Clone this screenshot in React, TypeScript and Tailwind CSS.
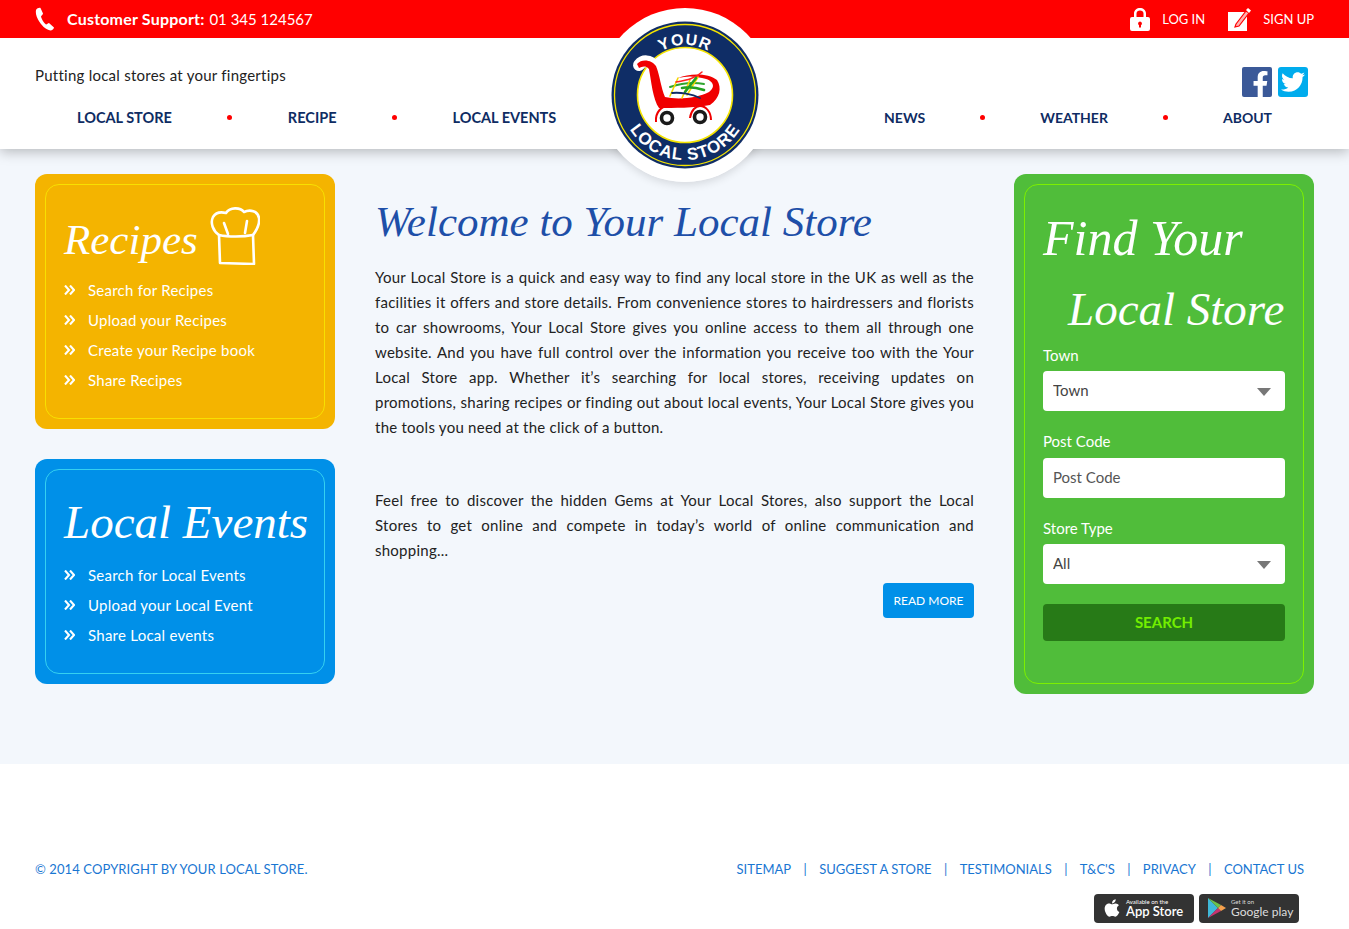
import React from "react";
import { FaApple, FaFacebookF, FaTwitter } from "react-icons/fa";

const navLeft = ["LOCAL STORE", "RECIPE", "LOCAL EVENTS"];
const navRight = ["NEWS", "WEATHER", "ABOUT"];
const footerLinks = ["SITEMAP", "SUGGEST A STORE", "TESTIMONIALS", "T&C'S", "PRIVACY", "CONTACT US"];

const script = "font-['Liberation_Serif',serif] italic font-normal whitespace-nowrap";

const Logo = () => (
  <svg viewBox="8 8 174 174" className="absolute left-[598px] top-[8px] z-20 h-[174px] w-[174px]">
    <circle cx="95" cy="95" r="87" fill="#fff" />
    <circle cx="95" cy="95" r="73.5" fill="#0f2d66" />
    <circle cx="95" cy="95" r="70.5" fill="none" stroke="#f5e400" strokeWidth="1.3" />
    <circle cx="95" cy="95" r="47.5" fill="#fff" stroke="#f5e400" strokeWidth="1.6" />
    <path id="logoTop" d="M 45 95 A 50 50 0 0 1 145 95" fill="none" />
    <path id="logoBottom" d="M 30 95 A 65 65 0 0 0 160 95" fill="none" />
    <text fill="#fff" fontSize="16" fontWeight="700" letterSpacing="1" fontFamily="Liberation Sans, sans-serif" textAnchor="middle">
      <textPath href="#logoTop" startOffset="50%">YOUR</textPath>
    </text>
    <text fill="#fff" fontSize="17" fontWeight="700" letterSpacing="1" fontFamily="Liberation Sans, sans-serif" textAnchor="middle">
      <textPath href="#logoBottom" startOffset="50%">LOCAL STORE</textPath>
    </text>
    {/* cart */}
    <path d="M49 65 C53 60 60 60 64 66" fill="none" stroke="#fff" strokeWidth="12" strokeLinecap="round" />
    <path
      fillRule="evenodd"
      fill="#f00000"
      d="M47 64 C52 58 62 60 66 66 C70 76 71 88 75 97 C88 100 108 98 119 92 C126 87 124 80 112 78 C104 76 96 76 88 78 C100 73 118 73 127 80 C132 88 130 98 120 105 C104 108 84 108 69 108 C63 100 61 80 59 69 C55 65 52 67 49 68 Z"
    />
    <path d="M80 87 C92 83 104 82 114 84" fill="none" stroke="#2fa52f" strokeWidth="2" strokeLinecap="round" />
    <path d="M88 78 L80 96 M100 80 L92 98 M108 77 L97 95" fill="none" stroke="#f5d800" strokeWidth="1.6" strokeLinecap="round" />
    <path d="M86 82 C98 80 106 78 112 72" fill="none" stroke="#ff2020" strokeWidth="1.5" strokeLinecap="round" />
    <path d="M95 92 L106 78 M92 88 C100 86 108 88 114 90" fill="none" stroke="#22a022" strokeWidth="2.6" strokeLinecap="round" />
    <path d="M82 93 C90 92 102 94 110 98" fill="none" stroke="#0f2d66" strokeWidth="1.8" strokeLinecap="round" />
    <path d="M66 122 C65 112 72 106 78 106 M100 118 C101 110 106 106 110 106 C116 106 121 112 121 120" fill="none" stroke="#f00000" strokeWidth="2" />
    <circle cx="77" cy="118" r="5.5" fill="#fff" stroke="#1a1a1a" strokeWidth="3.6" />
    <circle cx="110" cy="117" r="5.5" fill="#fff" stroke="#1a1a1a" strokeWidth="3.6" />
  </svg>
);

const TopBar = () => (
  <div className="flex h-[38px] items-center justify-between bg-[#ff0000] px-[35px] text-white">
    <div className="flex items-center gap-[12px]">
      <svg viewBox="0 0 20 24" className="h-[24px] w-[20px]" fill="#fff">
        <path d="M1 3 C2 1.5 4 .5 5.5 1 L8 6.5 C8 7.5 6.5 8.5 6 9.5 C6.5 12 9 16 11 17.5 C12 17.2 13 16 14 16 L19 20.5 C19 22 17 23.5 15.5 23.5 C11 23 6 18 3 12.5 C1 9 .5 5 1 3 Z" />
      </svg>
      <span className="text-[15px]">
        <b className="mr-[1px] text-[16px] tracking-[0.2px]">Customer Support:</b> 01 345 124567
      </span>
    </div>
    <div className="flex items-center text-[13px]">
      <svg viewBox="0 0 20 24" className="mr-[12px] h-[24px] w-[20px]" fill="#fff">
        <path d="M4 10 V6.5 C4 3 7 1 10 1 C13 1 16 3 16 6.5 V10 H13.5 V6.5 C13.5 4.5 12 3.4 10 3.4 C8 3.4 6.5 4.5 6.5 6.5 V10 Z" />
        <path fillRule="evenodd" d="M2 10 H18 Q20 10 20 12 V22 Q20 24 18 24 H2 Q0 24 0 22 V12 Q0 10 2 10 Z M10 14.5 A2 2 0 0 0 9 18.2 V20.5 H11 V18.2 A2 2 0 0 0 10 14.5 Z" />
      </svg>
      <span className="mt-[1px]">LOG IN</span>
      <svg viewBox="0 0 23 23" className="ml-[23px] mr-[12px] h-[23px] w-[23px]">
        <rect x="0" y="4" width="19" height="19" fill="#fff" />
        <path d="M8 16 L18 3 L21 5 L11 18 L7 19 Z" fill="#ffb0b0" stroke="#ff0000" strokeWidth="1.2" />
        <path d="M18 2 L20 0 L23 2.5 L21 5 Z" fill="#fff" />
      </svg>
      <span className="mt-[1px]">SIGN UP</span>
    </div>
  </div>
);

const NavGroup = ({ items, className }: { items: string[]; className: string }) => (
  <div className={`flex items-center font-bold text-[#0e2c63] ${className}`}>
    {items.map((item, i) => (
      <React.Fragment key={item}>
        {i > 0 && <span className="h-[5px] w-[5px] rounded-full bg-[#ff0000]" />}
        <a>{item}</a>
      </React.Fragment>
    ))}
  </div>
);

const Header = () => (
  <header className="relative z-10 shadow-[0_3px_12px_rgba(0,0,0,0.25)]">
    <TopBar />
    <div className="h-[111px] bg-white">
      <div className="flex items-start justify-between pl-[35px] pr-[41px] pt-[29px]">
        <p className="mt-[-3px] text-[15px] tracking-[0.25px] text-[#222]">Putting local stores at your fingertips</p>
        <div className="flex gap-[6px]">
          <span className="flex h-[30px] w-[30px] items-end justify-end overflow-hidden rounded-[2px] bg-[#3b5998] pr-[3px] text-white">
            <FaFacebookF className="h-[26px] w-[17px]" />
          </span>
          <span className="flex h-[30px] w-[30px] items-center justify-center rounded-[3px] bg-[#00aced] text-white">
            <FaTwitter className="h-[24px] w-[24px]" />
          </span>
        </div>
      </div>
      <nav className="mt-[10px] flex justify-between px-[77px]">
        <NavGroup items={navLeft} className="gap-[55.5px] text-[14.5px]" />
        <NavGroup items={navRight} className="gap-[55px] text-[14px]" />
      </nav>
    </div>
    {/* soft shadow of the badge, only visible below the header */}
    <span className="absolute left-[598px] top-[8px] -z-10 h-[174px] w-[174px] rounded-full shadow-[0_3px_8px_rgba(0,0,0,0.12)]" />
    <Logo />
  </header>
);

const Chevrons = () => (
  <svg viewBox="0 0 11 10" className="h-[10px] w-[11px] shrink-0" fill="none" stroke="#fff" strokeWidth="2.1">
    <path d="M1 .5 L5 5 L1 9.5 M6 .5 L10 5 L6 9.5" />
  </svg>
);

const SideCard = ({
  title,
  titleSize,
  items,
  outer,
  inner,
  children,
}: {
  title: string;
  titleSize: string;
  items: string[];
  outer: string;
  inner: string;
  children?: React.ReactNode;
}) => (
  <section className={`rounded-[12px] p-[10px] text-white ${outer}`}>
    <div className={`rounded-[14px] border pl-[18px] pr-[5px] ${inner}`}>
      <div className="flex h-[86px] items-end pb-[10px]">
        <h2 className={`leading-none ${titleSize} ${script}`}>{title}</h2>
        {children}
      </div>
      <ul className="flex flex-col gap-[6px] pb-[26px] pt-[7px] text-[15px] tracking-[0.25px]">
        {items.map((item) => (
          <li key={item} className="flex h-[24px] items-center gap-[13px]">
            <Chevrons />
            <span>{item}</span>
          </li>
        ))}
      </ul>
    </div>
  </section>
);

const ChefHat = () => (
  <svg viewBox="0 0 50 58" className="mb-[-4px] ml-[12px] h-[58px] w-[50px]" fill="none" stroke="#fff" strokeWidth="2.6" strokeLinecap="round" strokeLinejoin="round">
    <path d="M9 28 C3 24 0 16 3 10 C6 5 12 5 16 6 C20 0 30 0 34 5 C40 2 48 4 49 11 C50 18 46 24 43 28" />
    <path d="M9 28 L10 56 L44 57 L43 28 C33 30 18 30 9 28 Z" />
    <path d="M14 16 L18 27 M37 14 L35 26" />
  </svg>
);

const Field = ({ label, children }: { label: string; children: React.ReactNode }) => (
  <div>
    <label className="mb-[5px] block text-[15px] leading-[22px]">{label}</label>
    {children}
  </div>
);

const Select = ({ value }: { value: string }) => (
  <div className="relative">
    <select className="h-[40px] w-full appearance-none rounded-[4px] bg-white px-[10px] pb-[2px] text-[15px] text-[#444]" defaultValue={value}>
      <option>{value}</option>
    </select>
    <span className="absolute right-[14px] top-[17px] h-0 w-0 border-x-[7px] border-t-[8px] border-x-transparent border-t-[#777]" />
  </div>
);

const FindCard = () => (
  <section className="rounded-[12px] bg-[#50bd3a] p-[10px] text-white">
    <div className="h-[500px] rounded-[14px] border border-[#7cf000] px-[18px]">
      <h2 className={`pt-[18px] text-[50px] leading-[70px] ${script}`}>
        Find Your
        <br />
        <span className="pl-[25px] text-[47px]">Local Store</span>
      </h2>
      <div className="flex flex-col gap-[19px]">
        <Field label="Town">
          <Select value="Town" />
        </Field>
        <Field label="Post Code">
          <input
            placeholder="Post Code"
            className="mt-[1px] h-[40px] w-full rounded-[4px] bg-white px-[10px] pb-[2px] text-[15px] text-[#444] placeholder:text-[#555]"
          />
        </Field>
        <Field label="Store Type">
          <Select value="All" />
        </Field>
      </div>
      <button className="mt-[20px] h-[37px] w-full rounded-[4px] bg-[#277a17] text-[15px] font-bold text-[#73ee00]">SEARCH</button>
    </div>
  </section>
);

const Welcome = () => (
  <div className="min-w-0 flex-1">
    <h1 className={`mt-[20px] text-[43px] leading-[56px] text-[#1e4fa8] ${script}`}>Welcome to Your Local Store</h1>
    <div className="mt-[15px] text-justify text-[15px] leading-[25px] tracking-[0.25px] text-[#222]">
      <p>
        Your Local Store is a quick and easy way to find any local store in the UK as well as the facilities it offers and store details. From
        convenience stores to hairdressers and florists to car showrooms, Your Local Store gives you online access to them all through one
        website. And you have full control over the information you receive too with the Your Local Store app. Whether it’s searching for local
        stores, receiving updates on promotions, sharing recipes or finding out about local events, Your Local Store gives you the tools you need
        at the click of a button.
      </p>
      <p className="mt-[48px]">
        Feel free to discover the hidden Gems at Your Local Stores, also support the Local Stores to get online and compete in today’s world of
        online communication and shopping...
      </p>
    </div>
    <div className="mt-[20px] flex justify-end">
      <button className="h-[35px] w-[91px] rounded-[4px] bg-[#0090e8] text-[12px] text-white">READ MORE</button>
    </div>
  </div>
);

const Footer = () => (
  <footer className="h-[165px] bg-white px-[35px] pt-[96px] text-[13px] text-[#1976d2]">
    <div className="flex items-center justify-between pr-[10px]">
      <span className="tracking-[0.1px]">© 2014 COPYRIGHT BY YOUR LOCAL STORE.</span>
      <div className="flex items-center gap-[12.4px]">
        {footerLinks.map((link, i) => (
          <React.Fragment key={link}>
            {i > 0 && <span>|</span>}
            <a>{link}</a>
          </React.Fragment>
        ))}
      </div>
    </div>
    <div className="mt-[14px] flex justify-end gap-[5px] pr-[15px]">
      <div className="flex h-[29px] w-[100px] items-center gap-[5px] rounded-[4px] bg-[#333] pl-[9px] text-white">
        <FaApple className="h-[20px] w-[18px]" />
        <div className="flex flex-col">
          <span className="text-[6px] leading-[7px]">Available on the</span>
          <span className="text-[13px] font-semibold leading-[13px]">App Store</span>
        </div>
      </div>
      <div className="flex h-[29px] w-[100px] items-center gap-[5px] rounded-[4px] bg-[#333] pl-[9px] text-[#ddd]">
        <svg viewBox="0 0 18 20" className="h-[20px] w-[18px]">
          <path d="M0 0 L10 10 L0 20 Z" fill="#3fb8d8" />
          <path d="M0 0 L13 7 L10 10 Z" fill="#6cc24a" />
          <path d="M0 20 L13 13 L10 10 Z" fill="#c8326e" />
          <path d="M13 7 L18 10 L13 13 L10 10 Z" fill="#f6a04d" />
        </svg>
        <div className="flex flex-col">
          <span className="text-[6px] leading-[7px]">Get it on</span>
          <span className="text-[12px] leading-[13px]">Google play</span>
        </div>
      </div>
    </div>
  </footer>
);

export default function App() {
  return (
    <div className="min-h-screen bg-white font-[Lato,sans-serif] [font-variant-ligatures:none]">
      <Header />
      <main className="flex h-[615px] gap-[40px] bg-[#f3f7fc] px-[35px] pt-[25px]">
        <aside className="flex w-[300px] shrink-0 flex-col gap-[30px]">
          <SideCard
            title="Recipes"
            titleSize="text-[43px]"
            outer="bg-[#f4b400]"
            inner="border-[#f8e000]"
            items={["Search for Recipes", "Upload your Recipes", "Create your Recipe book", "Share Recipes"]}
          >
            <ChefHat />
          </SideCard>
          <SideCard
            title="Local Events"
            titleSize="text-[47px]"
            outer="bg-[#0090e8]"
            inner="border-[#35d0f0]"
            items={["Search for Local Events", "Upload your Local Event", "Share Local events"]}
          />
        </aside>
        <Welcome />
        <aside className="w-[300px] shrink-0">
          <FindCard />
        </aside>
      </main>
      <Footer />
    </div>
  );
}
